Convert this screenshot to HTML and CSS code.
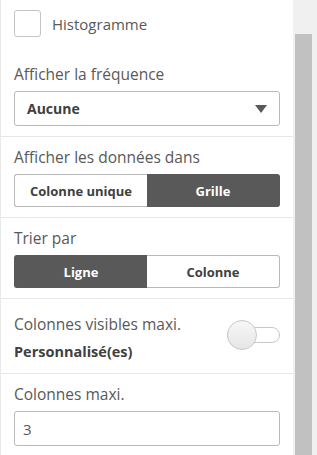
FILE: index.html
```html
<!DOCTYPE html>
<html lang="fr">

<head>
    <meta charset="UTF-8">
    <meta name="viewport" content="width=device-width, initial-scale=1.0">
    <title>Propriétés</title>
    <link rel="stylesheet" href="styles.css">
</head>

<body>
    <div class="wrap">
        <!-- panneau des propriétés -->
        <div class="panel">
            <div class="section first">
                <label class="check">
                    <span class="box"></span>
                    <span class="check-text">Histogramme</span>
                </label>
            </div>

            <div class="section">
                <div class="label">Afficher la fréquence</div>
                <div class="select">
                    <span>Aucune</span>
                    <svg class="arrow" width="12" height="8" viewBox="0 0 12 8">
                        <path d="M0 0 L12 0 L6 8 Z" fill="#595959"/>
                    </svg>
                </div>
            </div>

            <div class="section line">
                <div class="label">Afficher les données dans</div>
                <div class="seg">
                    <a href="javascript:;">Colonne unique</a>
                    <a href="javascript:;" class="on">Grille</a>
                </div>
            </div>

            <div class="section line">
                <div class="label">Trier par</div>
                <div class="seg">
                    <a href="javascript:;" class="on">Ligne</a>
                    <a href="javascript:;">Colonne</a>
                </div>
            </div>

            <div class="section line row">
                <div class="texts">
                    <div class="label">Colonnes visibles maxi.</div>
                    <div class="value">Personnalisé(es)</div>
                </div>
                <div class="switch">
                    <span class="track"></span>
                    <span class="knob"></span>
                </div>
            </div>

            <div class="section line">
                <div class="label">Colonnes maxi.</div>
                <div class="input">3</div>
            </div>
        </div>
        <!-- barre de défilement -->
        <div class="scrollbar">
            <div class="thumb"></div>
        </div>
    </div>
</body>

</html>
```

FILE: styles.css
```css
* {
    margin: 0;
    padding: 0;
    box-sizing: border-box;
}

body {
    font-family: "Open Sans", Lato, sans-serif;
    color: #595959;
    background-color: #fff;
    overflow: hidden;
}

.wrap {
    display: flex;
    height: 455px;
}

.panel {
    width: 293px;
    border-left: 1px solid #eaeaea;
}

.section {
    padding: 10px 13px 10px 13px;
}

.section.first {
    padding: 10px 13px 17px 13px;
}

/* ligne de séparation */
.section.line {
    border-top: 1px solid #e6e6e6;
}

.check {
    display: flex;
    align-items: center;
    gap: 11px;
}

.box {
    width: 27px;
    height: 27px;
    border: 1px solid #c4c4c4;
    border-radius: 3px;
}

.check-text {
    font-size: 15px;
}

.label {
    font-size: 15.5px;
    line-height: 20px;
    margin-bottom: 7px;
}

.select,
.input {
    height: 35px;
    border: 1px solid #b9b9b9;
    border-radius: 3px;
    display: flex;
    align-items: center;
    font-size: 14px;
}

.select {
    justify-content: space-between;
    padding: 0 12px 0 12px;
    font-weight: bold;
    color: #404040;
}

.input {
    padding: 0 8px;
    font-size: 15px;
    color: #595959;
}

.seg {
    display: flex;
    height: 33px;
}

.seg a {
    flex: 1;
    display: flex;
    align-items: center;
    justify-content: center;
    font-size: 13px;
    font-weight: bold;
    color: #404040;
    text-decoration: none;
    border: 1px solid #b9b9b9;
}

.seg a:first-child {
    border-radius: 3px 0 0 3px;
    border-right: none;
}

.seg a:last-child {
    border-radius: 0 3px 3px 0;
    border-left: none;
}

.seg a.on {
    background-color: #595959;
    border-color: #595959;
    color: #fff;
}

.section.row {
    display: flex;
    justify-content: space-between;
    align-items: flex-start;
    padding: 15px 13px 11px 13px;
}

.row .label {
    margin-bottom: 8px;
}

.value {
    font-size: 14.5px;
    line-height: 20px;
    font-weight: bold;
    color: #404040;
}

.switch {
    position: relative;
    width: 53px;
    height: 30px;
    margin-top: 6px;
}

.track {
    position: absolute;
    left: 0;
    top: 7px;
    width: 53px;
    height: 16px;
    border: 1px solid #c8c8c8;
    border-radius: 8px;
    background-color: #fff;
}

/* bouton rond par-dessus la piste */
.knob {
    position: absolute;
    left: 0;
    top: 0;
    width: 30px;
    height: 30px;
    border-radius: 50%;
    border: 1px solid #c8c8c8;
    background: linear-gradient(#f7f7f7, #e6e6e6);
}

.scrollbar {
    width: 24px;
    background-color: #f0f0f0;
    padding: 34px 5px 0 2px;
}

.thumb {
    height: 100%;
    background-color: #c1c1c1;
}
```
